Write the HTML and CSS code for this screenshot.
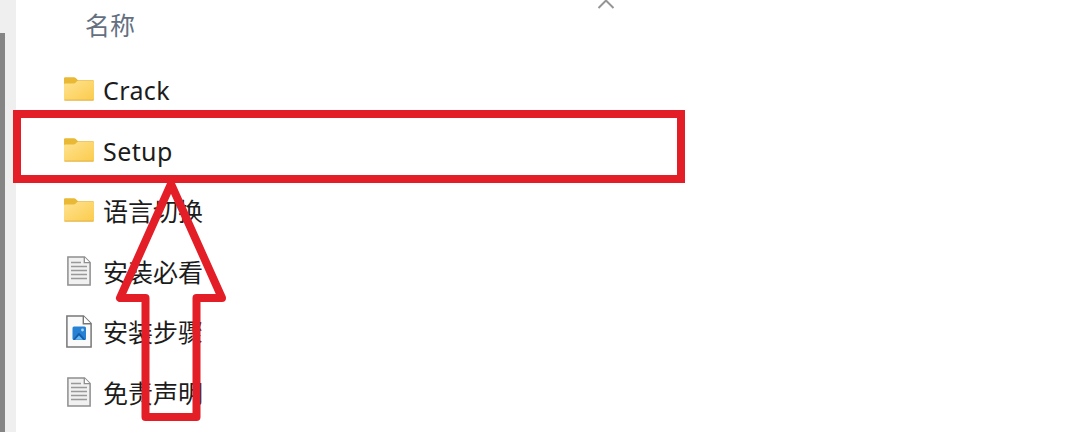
FILE: index.html
```html
<!DOCTYPE html>
<html lang="zh-CN">
<head>
    <meta charset="UTF-8">
    <meta name="viewport" content="width=device-width, initial-scale=1.0">
    <title>文件列表</title>
    <link rel="stylesheet" href="styles.css">
</head>
<body>
    <!-- Shared icons -->
    <svg class="defs" width="0" height="0">
        <defs>
            <linearGradient id="folder-fill" x1="0" y1="0" x2="1" y2="1">
                <stop offset="0" stop-color="#ffe391"/>
                <stop offset="1" stop-color="#fbcb4b"/>
            </linearGradient>
            <symbol id="folder" viewBox="0 0 30 24">
                <path d="M0 1.5Q0 .3 1.2 .3H10Q11 .3 11.8 1.1L14 3.3H29Q30 3.3 30 4.3V12H0Z" fill="#e9b935"/>
                <path d="M0 7.5Q0 6.5 1.2 6.5H9.5Q10.8 6.5 11.8 5.5L13.2 4.1H29Q30 4.1 30 5.1V22.5Q30 23.5 29 23.5H1Q0 23.5 0 22.5Z" fill="url(#folder-fill)"/>
                <path d="M.5 23.1H29.5" stroke="#dfb04a" stroke-width="1"/>
            </symbol>
            <symbol id="text-file" viewBox="0 0 24 30">
                <path d="M.9 .9H17.5L23.1 6.5V29.1H.9Z" fill="#f1f1f1" stroke="#8e8e8e" stroke-width="1.5"/>
                <path d="M17.3 1V6.7H23" fill="#fff" stroke="#8e8e8e" stroke-width="1.3"/>
                <path d="M4 6.5H14M4 10.5H20M4 14.5H20M4 18.5H20M4 22.5H20" stroke="#999" stroke-width="1.3"/>
            </symbol>
            <symbol id="image-file" viewBox="0 0 26 33">
                <path d="M.9 .9H17.5L25.1 8.5V32.1H.9Z" fill="#fafafa" stroke="#777" stroke-width="1.5"/>
                <path d="M17.3 1V8.7H25" fill="#fff" stroke="#777" stroke-width="1.4"/>
                <rect x="6.5" y="11.5" width="13.5" height="13.5" rx="1.5" fill="#2680d3"/>
                <path d="M7 24.7L12.3 18.3Q13 17.6 13.7 18.3L19.5 24.7Z" fill="#145ca8"/>
                <path d="M9 24.8L13 20.5L17 24.8Z" fill="#65b8f4"/>
                <circle cx="16.5" cy="15" r="1.4" fill="#a9d8fa"/>
            </symbol>
        </defs>
    </svg>

    <div class="window">
        <div class="scrollbar">
            <div class="thumb"></div>
        </div>
        <div class="content">
            <div class="header">
                <span class="col-name">名称</span>
                <svg class="sort-icon" viewBox="0 0 18 9">
                    <path d="M1.5 8L9 .5L16.5 8" fill="none" stroke="#959595" stroke-width="2"/>
                </svg>
            </div>
            <ul class="file-list">
                <li class="file">
                    <span class="icon"><svg class="folder"><use href="#folder"/></svg></span>
                    <span class="name latin">Crack</span>
                </li>
                <li class="file">
                    <span class="icon"><svg class="folder"><use href="#folder"/></svg></span>
                    <span class="name latin">Setup</span>
                </li>
                <li class="file">
                    <span class="icon"><svg class="folder"><use href="#folder"/></svg></span>
                    <span class="name">语言切换</span>
                </li>
                <li class="file">
                    <span class="icon"><svg class="text-file"><use href="#text-file"/></svg></span>
                    <span class="name">安装必看</span>
                </li>
                <li class="file">
                    <span class="icon"><svg class="image-file"><use href="#image-file"/></svg></span>
                    <span class="name">安装步骤</span>
                </li>
                <li class="file">
                    <span class="icon"><svg class="text-file"><use href="#text-file"/></svg></span>
                    <span class="name">免责声明</span>
                </li>
            </ul>
        </div>

        <!-- Red marks over the list -->
        <div class="highlight"></div>
        <svg class="arrow" viewBox="0 0 112 242">
            <path d="M56 4L5 118H30.5V237H81.5V118H107Z"/>
        </svg>
    </div>
</body>
</html>
```

FILE: styles.css
```css
/* General Styles */
* {
    box-sizing: border-box;
}

body {
    margin: 0;
    background-color: #fff;
    color: #1c1c1c;
    font-family: "Noto Sans", "Noto Sans CJK SC", sans-serif;
    overflow: hidden;
}

.defs {
    position: absolute;
}

.window {
    position: relative;
    display: flex;
    height: 436px;
}

/* Scrollbar */
.scrollbar {
    width: 16px;
    height: 432px;
    padding-top: 33px;
    background-color: #efefef;
}

.thumb {
    width: 5px;
    height: 100%;
    background-color: #858585;
}

.content {
    flex: 1;
}

/* Column header */
.header {
    display: flex;
    align-items: flex-start;
    height: 61px;
    padding-left: 69px;
}

.col-name {
    width: 512px;
    padding-top: 7px;
    font-size: 25px;
    line-height: 36px;
    color: #64707f;
}

.sort-icon {
    width: 18px;
    height: 9px;
}

/* File rows */
.file-list {
    margin: 0;
    padding: 0 0 0 48px;
    list-style: none;
}

.file {
    display: flex;
    align-items: center;
    gap: 9px;
    height: 60.5px;
}

.icon {
    display: flex;
    align-items: center;
    justify-content: center;
    width: 30px;
    height: 36px;
    margin-top: -4px;
}

.folder {
    width: 30px;
    height: 24px;
}

.text-file {
    width: 24px;
    height: 30px;
}

.image-file {
    width: 26px;
    height: 33px;
}

.name {
    margin-top: -2px;
    font-size: 25px;
    line-height: 36px;
}

.latin {
    letter-spacing: 0.4px;
}

/* Marks */
.highlight {
    position: absolute;
    left: 13px;
    top: 110px;
    width: 672px;
    height: 73px;
    border: 8px solid #e41e26;
}

.arrow {
    position: absolute;
    left: 115px;
    top: 180px;
    width: 112px;
    height: 242px;
}

.arrow path {
    fill: none;
    stroke: #e41e26;
    stroke-width: 8;
    stroke-linejoin: round;
}
```
